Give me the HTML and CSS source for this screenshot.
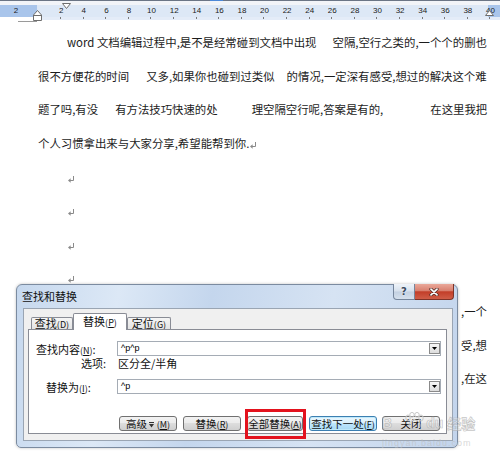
FILE: index.html
```html
<!DOCTYPE html>
<html lang="zh-CN">
<head>
<meta charset="utf-8">
<title>查找和替换</title>
<link rel="stylesheet" href="styles.css">
</head>
<body>
<div class="ruler">
  <div class="ruler-top"><span class="ruler-top-seg"></span></div>
  <div class="ruler-gap"></div>
  <div class="ruler-scale">
    <span class="num">2</span><span class="num"></span><span class="num">2</span><span class="num">4</span><span class="num">6</span><span class="num">8</span><span class="num">10</span><span class="num">12</span><span class="num">14</span><span class="num">16</span><span class="num">18</span><span class="num">20</span><span class="num">22</span><span class="num">24</span><span class="num">26</span><span class="num">28</span><span class="num">30</span><span class="num">32</span><span class="num">34</span><span class="num">36</span><span class="num">38</span><span class="num">40</span>
  </div>
  <div class="ruler-ticks"><div class="ticks"></div></div>
  <div class="ruler-foot"><span class="foot-line"></span></div>
  <svg class="mk mk-first" width="9" height="6" viewBox="0 0 9 6"><polygon points="0.5,0.5 8.5,0.5 4.5,5.5" fill="#fff" stroke="#6e6e6e"/></svg>
  <svg class="mk mk-left" width="9" height="11" viewBox="0 0 9 11"><polygon points="0.5,5 4.5,0.5 8.5,5 8.5,10.5 0.5,10.5" fill="#fff" stroke="#6e6e6e"/><line x1="0.5" y1="5.5" x2="8.5" y2="5.5" stroke="#6e6e6e"/></svg>
  <svg class="mk mk-right" width="9" height="6" viewBox="0 0 9 6"><polygon points="0.5,5.5 4.5,0.5 8.5,5.5" fill="#fff" stroke="#6e6e6e"/></svg>
</div>

<div class="page">
  <div class="line indent"><span>word 文档编辑过程中,是不是经常碰到文档中出现</span><span class="g16">空隔,空行之类的,一个个的删也</span></div>
  <div class="line"><span>很不方便花的时间</span><span class="g17">又多,如果你也碰到过类似</span><span class="g12">的情况,一定深有感受,想过的解决这个难</span></div>
  <div class="line"><span>题了吗,有没</span><span class="g17">有方法技巧快速的处</span><span class="g34">理空隔空行呢,答案是有的,</span><span class="g47">在这里我把</span></div>
  <div class="line"><span>个人习惯拿出来与大家分享,希望能帮到你.</span><svg class="pm" width="6" height="7" viewBox="0 0 6 7"><path d="M5.5 0 V4.5 H2" fill="none" stroke="#8a8a8a"/><polygon points="0,4.5 2.6,2.3 2.6,6.7" fill="#8a8a8a"/></svg></div>
  <div class="line indent"><svg class="pm" width="6" height="7" viewBox="0 0 6 7"><path d="M5.5 0 V4.5 H2" fill="none" stroke="#8a8a8a"/><polygon points="0,4.5 2.6,2.3 2.6,6.7" fill="#8a8a8a"/></svg></div>
  <div class="line indent"><svg class="pm" width="6" height="7" viewBox="0 0 6 7"><path d="M5.5 0 V4.5 H2" fill="none" stroke="#8a8a8a"/><polygon points="0,4.5 2.6,2.3 2.6,6.7" fill="#8a8a8a"/></svg></div>
  <div class="line indent"><svg class="pm" width="6" height="7" viewBox="0 0 6 7"><path d="M5.5 0 V4.5 H2" fill="none" stroke="#8a8a8a"/><polygon points="0,4.5 2.6,2.3 2.6,6.7" fill="#8a8a8a"/></svg></div>
  <div class="line indent"><svg class="pm" width="6" height="7" viewBox="0 0 6 7"><path d="M5.5 0 V4.5 H2" fill="none" stroke="#8a8a8a"/><polygon points="0,4.5 2.6,2.3 2.6,6.7" fill="#8a8a8a"/></svg></div>
  <div class="line right">,一个</div>
  <div class="line right">受,想</div>
  <div class="line right">,在这</div>
</div>

<div class="dialog">
  <div class="titlebar">
    <span class="title">查找和替换</span>
    <span class="cap help">?</span>
    <span class="cap close"><svg width="10" height="8" viewBox="0 0 10 8"><path d="M2 1.2 L8 6.8 M8 1.2 L2 6.8" stroke="#4a2a26" stroke-width="3.2" stroke-linecap="round"/><path d="M2 1.2 L8 6.8 M8 1.2 L2 6.8" stroke="#fff" stroke-width="1.7" stroke-linecap="round"/></svg></span>
  </div>
  <div class="client">
    <div class="tabs">
      <span class="tab t1">查找<span class="mn">(<u>D</u>)</span></span>
      <span class="tab sel">替换<span class="mn">(<u>P</u>)</span></span>
      <span class="tab t3">定位<span class="mn">(<u>G</u>)</span></span>
    </div>
    <div class="panel">
      <div class="row r1">
        <span class="lbl p7">查找内容<span class="mn">(<u>N</u>)</span>:</span>
        <span class="combo"><span class="val">^p^p</span><span class="dd"><svg width="5" height="3" viewBox="0 0 5 3"><polygon points="0,0 5,0 2.5,3" fill="#000"/></svg></span></span>
      </div>
      <div class="row r2">
        <span class="lbl p52">选项:</span>
        <span class="opt">区分全/半角</span>
      </div>
      <div class="row r3">
        <span class="lbl p17">替换为<span class="mn">(<u>I</u>)</span>:</span>
        <span class="combo"><span class="val">^p</span><span class="dd"><svg width="5" height="3" viewBox="0 0 5 3"><polygon points="0,0 5,0 2.5,3" fill="#000"/></svg></span></span>
      </div>
      <div class="btns">
        <button class="btn b1">高级 <svg class="more" width="5" height="6" viewBox="0 0 5 6"><line x1="0" y1="0.5" x2="5" y2="0.5" stroke="#333"/><polygon points="0,2 5,2 2.5,5.5" fill="#333"/></svg> <span class="mn">(<u>M</u>)</span></button>
        <button class="btn b2">替换<span class="mn">(<u>R</u>)</span></button>
        <button class="btn b3">全部替换<span class="mn">(<u>A</u>)</span></button>
        <button class="btn b4 def">查找下一处<span class="mn">(<u>F</u>)</span></button>
        <button class="btn b5">关闭</button>
      </div>
    </div>
  </div>
  <div class="highlight"></div>
</div>

<div class="wm">
  <div class="wm-main"><span>B</span><svg class="paw" width="20" height="18" viewBox="0 0 20 18"><ellipse cx="4" cy="6" rx="2.2" ry="3" fill="none" stroke="#c8c8c8"/><ellipse cx="8" cy="2.8" rx="2.2" ry="2.4" fill="none" stroke="#c8c8c8"/><ellipse cx="13" cy="2.8" rx="2.2" ry="2.4" fill="none" stroke="#c8c8c8"/><ellipse cx="17" cy="6" rx="2.2" ry="3" fill="none" stroke="#c8c8c8"/><path d="M10.5 8 C6 8 4 13 5.5 15.5 C7 17.5 14 17.5 15.5 15.5 C17 13 15 8 10.5 8 Z" fill="none" stroke="#c8c8c8"/></svg><span>du</span><span class="wm-cn">经验</span></div>
  <div class="wm-sub">jingyan.baidu.com</div>
</div>
</body>
</html>
```

FILE: styles.css
```css
* { box-sizing: border-box; }

body {
  margin: 0;
  width: 500px;
  height: 459px;
  overflow: hidden;
  position: relative;
  background: #fff;
  font-family: "Noto Sans CJK SC", "Noto Sans", sans-serif;
}

/* ---------- ruler ---------- */
.ruler { position: relative; height: 22px; }
.ruler-top { height: 1px; background: #6b7585; display: flex; }
.ruler-top-seg { margin-left: 210px; width: 13px; background: #4c88d8; }
.ruler-gap { height: 4px; background: #f2f4f8; }
.ruler-scale {
  height: 12px;
  display: flex;
  padding-left: 4.7px;
  background: linear-gradient(to right, #a9c5eb 0 37px, #dde8f6 37px 488px, #a9c5eb 488px);
  font: 8px/12px "Liberation Sans", sans-serif;
  color: #1b1b1b;
}
.num { flex: 0 0 22.6px; text-align: center; }
.ruler-ticks { height: 3px; margin-left: 37px; background: #e4ecf8; padding-left: 23px; }
.ticks {
  height: 2px;
  background: repeating-linear-gradient(to right, #7b7b7b 0 1px, transparent 1px 22.6px);
}
.ruler-foot { height: 2px; display: flex; align-items: flex-end; }
.foot-line { margin-left: 18px; width: 19px; height: 1px; background: #9a9a9a; }
.mk { position: absolute; display: block; }
.mk-first { left: 62px; top: 3px; }
.mk-left { left: 33px; top: 10px; }
.mk-right { left: 485px; top: 10px; }

/* ---------- document ---------- */
.page {
  padding: 4.2px 13px 0 38px;
  font-size: 11.4px;
  color: #1c1c1c;
}
.line { height: 33.6px; line-height: 33.6px; white-space: nowrap; }
.indent { padding-left: 29px; }
.right { text-align: right; }
.g12 { margin-left: 12px; }
.g16 { margin-left: 16px; }
.g17 { margin-left: 17px; }
.g34 { margin-left: 34px; }
.g47 { margin-left: 47px; }
.pm { vertical-align: -1px; margin-left: 1px; }

/* ---------- dialog ---------- */
.dialog {
  position: absolute;
  left: 16px;
  top: 284px;
  width: 442px;
  height: 164px;
  border: 1px solid #7b8ba0;
  border-radius: 6px 6px 5px 5px;
  background: linear-gradient(100deg, #c6d8ee 0%, #dce8f6 22%, #c4d6ed 42%, #d6e3f3 68%, #c2d4ec 100%);
  box-shadow: 0 0 3px rgba(0, 0, 0, 0.25);
  padding: 0 4px 0 6px;
  display: flex;
  flex-direction: column;
}
.titlebar { height: 23px; display: flex; align-items: flex-start; }
.title { font-size: 11px; line-height: 12px; margin: 5px 0 0 -1px; color: #111; }
.cap {
  height: 16px;
  display: flex;
  align-items: center;
  justify-content: center;
  margin-top: -1px;
}
.help {
  margin-left: auto;
  width: 22px;
  border: 1px solid #75859b;
  border-top: none;
  border-radius: 0 0 0 4px;
  background: linear-gradient(#eef3f9, #d6e0ec 48%, #c3d0e1 52%, #d5e0ed);
  font: bold 10px/14px "DejaVu Sans", sans-serif;
  color: #3b4a5e;
  text-shadow: 0 0 2px #fff;
}
.close {
  width: 39px;
  margin-right: -1px;
  border: 1px solid #7d3328;
  border-top: none;
  border-left: none;
  border-radius: 0 0 4px 0;
  background: linear-gradient(#eaa89a, #d8806f 45%, #c23e29 52%, #cf5d47);
}

.client {
  height: 133px;
  border: 1px solid #9aa5b3;
  background: #f0f0f0;
  display: flex;
  flex-direction: column;
}
.tabs { display: flex; align-items: flex-end; height: 16px; margin: 4px 0 0 7px; }
.tab {
  height: 12px;
  border: 1px solid #898c95;
  border-bottom: none;
  border-radius: 2px 2px 0 0;
  background: linear-gradient(#f5f5f5, #e4e4e4);
  font-size: 11px;
  line-height: 11px;
  text-align: center;
  color: #111;
  white-space: nowrap;
}
.t1 { width: 42px; }
.t3 { width: 44px; }
.tab.sel {
  width: 54px;
  height: 17px;
  margin-bottom: -1px;
  padding-top: 2px;
  background: #fff;
  position: relative;
  z-index: 1;
}
.mn { font-size: 9px; }

.panel {
  margin-left: 4px;
  width: 419px;
  height: 105px;
  border: 1px solid #898c95;
  background: #fff;
  display: flex;
  flex-direction: column;
}
.row { display: flex; align-items: center; }
.r1 { margin-top: 11px; height: 15px; }
.r2 { height: 14px; }
.r3 { margin-top: 9px; height: 15px; }
.lbl { width: 88px; font-size: 11px; white-space: nowrap; color: #111; }
.p7 { padding-left: 7px; }
.p17 { padding-left: 17px; }
.p52 { padding-left: 52px; }
.opt { font-size: 11px; padding-left: 1px; color: #111; }
.combo {
  width: 324px;
  height: 15px;
  border: 1px solid #a5acb5;
  display: flex;
  align-items: center;
  padding-left: 3px;
  font: 9px/13px "Liberation Sans", sans-serif;
  color: #000;
}
.val { flex: 1; }
.dd {
  width: 11px;
  height: 11px;
  border: 1px solid #8a8a8a;
  background: linear-gradient(#f7f7f7, #dcdcdc);
  display: flex;
  align-items: center;
  justify-content: center;
}

.btns { display: flex; margin: 22px 0 0 90px; }
.btn {
  height: 15px;
  padding: 0;
  border: 1px solid #707070;
  border-radius: 3px;
  background: linear-gradient(#f2f2f2 0, #ebebeb 50%, #dddddd 50%, #cfcfcf 100%);
  font-family: "Noto Sans CJK SC", "Noto Sans", sans-serif;
  font-size: 10.5px;
  line-height: 13px;
  color: #111;
  text-align: center;
  white-space: nowrap;
}
.b1 { width: 58px; }
.b2 { width: 58px; margin-left: 6px; }
.b3 { width: 56px; margin-left: 6px; }
.b4 { width: 68px; margin-left: 6px; }
.b5 { width: 58px; margin-left: 5px; }
.def {
  border-color: #3c7fb1;
  background: linear-gradient(#eaf6fd 0, #d9f0fc 50%, #bee6fd 50%, #a7d9f5 100%);
  box-shadow: inset 0 0 0 1px #bfe9fb;
}
.more { vertical-align: 0; }

.highlight {
  position: absolute;
  left: 228px;
  top: 124px;
  width: 61px;
  height: 30px;
  border: 3px solid #e3121d;
}

/* ---------- watermark ---------- */
.wm {
  position: absolute;
  left: 382px;
  top: 412px;
  display: flex;
  flex-direction: column;
  pointer-events: none;
}
.wm-main {
  display: flex;
  align-items: flex-end;
  font: bold 14px/16px "Liberation Sans", sans-serif;
  color: rgba(255, 255, 255, 0.35);
  -webkit-text-stroke: 0.7px rgba(170, 170, 170, 0.7);
}
.paw { margin: 0 2px 1px 12px; }
.wm-cn { margin-left: 4px; font-family: "Noto Sans CJK SC", sans-serif; font-size: 14px; }
.wm-sub {
  margin-top: 7px;
  font: 9px/10px "Liberation Sans", sans-serif;
  color: rgba(190, 190, 190, 0.6);
  letter-spacing: 1px;
}
```
